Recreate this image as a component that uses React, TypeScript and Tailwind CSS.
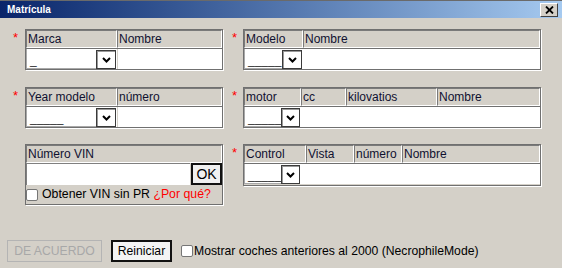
import React from "react";

function Chevron() {
  return (
    <svg width="9" height="6" viewBox="0 0 9 6">
      <path d="M1 1 L4.5 4.5 L8 1" fill="none" stroke="#000" strokeWidth="2" />
    </svg>
  );
}

function Select({ text, className }: { text: string; className: string }) {
  return (
    <div className={`${className} flex h-full bg-white`}>
      <div className="flex-1 border-l border-b border-[#a8a8a8] flex items-end pl-[3px] pb-[1px] text-[12px] leading-[14px] text-[#333]">
        {text}
      </div>
      <div className="w-[20px] h-[19px] mt-[1px] mr-[1px] border border-[#3a3a3a] shadow-[inset_1px_1px_0_#9a9a9a] bg-white flex items-center justify-center">
        <Chevron />
      </div>
    </div>
  );
}

function Head({ className, children }: { className: string; children: React.ReactNode }) {
  return (
    <div
      className={`${className} h-[18px] border border-t-[#7a7a7a] border-l-[#7a7a7a] border-r-white border-b-white bg-[#d4d0c8] pl-[1px] text-[12px] leading-[16px] text-[#101030] whitespace-nowrap overflow-hidden`}
    >
      {children}
    </div>
  );
}

function Star() {
  return <div className="text-[#ff0000] text-[13px] leading-none pt-[2px] pl-[3px]">*</div>;
}

const panelCls =
  "border border-[#707070] shadow-[1px_1px_0_#ffffff] flex flex-col bg-[#d4d0c8]";

export default function App() {
  return (
    <div className="w-[562px] h-[268px] bg-[#d4d0c8] flex flex-col font-['Liberation_Sans',Arial,sans-serif] text-black overflow-hidden">
      {/* Title bar */}
      <div className="h-[18px] border-t border-[#6a6a6a] bg-gradient-to-r from-[#0a246a] to-[#a6caf0] flex items-center justify-between pl-[7px] pr-[4px]">
        <span className="text-white font-bold text-[10px] leading-none">Matrícula</span>
        <div className="w-[18px] h-[14px] bg-[#d4d0c8] border border-t-white border-l-white border-r-[#404040] border-b-[#404040] flex items-center justify-center">
          <svg width="9" height="8" viewBox="0 0 9 8">
            <path d="M1 0.5 L8 7.5 M8 0.5 L1 7.5" stroke="#000" strokeWidth="1.8" />
          </svg>
        </div>
      </div>

      <div className="flex flex-col pt-[11px] pl-[10px]">
        {/* Row 1 */}
        <div className="flex h-[41px]">
          <div className="w-[15px]"><Star /></div>
          <div className={`w-[198px] ${panelCls}`}>
            <div className="flex">
              <Head className="w-[91px]">Marca</Head>
              <Head className="w-[105px]">Nombre</Head>
            </div>
            <div className="flex h-[21px] border-t border-[#707070] bg-white">
              <Select text="_" className="w-[91px]" />
              <div className="w-[105px] border-l border-[#d4d0c8] bg-white" />
            </div>
          </div>
          <div className="w-[6px]" />
          <div className="w-[14px]"><Star /></div>
          <div className={`w-[298px] ${panelCls}`}>
            <div className="flex">
              <Head className="w-[59px]">Modelo</Head>
              <Head className="w-[237px]">Nombre</Head>
            </div>
            <div className="flex h-[21px] border-t border-[#707070] bg-white">
              <Select text="_____" className="w-[59px]" />
              <div className="flex-1 bg-white" />
            </div>
          </div>
        </div>

        {/* Row 2 */}
        <div className="flex h-[41px] mt-[17px]">
          <div className="w-[15px]"><Star /></div>
          <div className={`w-[198px] ${panelCls}`}>
            <div className="flex">
              <Head className="w-[91px]">Year modelo</Head>
              <Head className="w-[105px]">número</Head>
            </div>
            <div className="flex h-[21px] border-t border-[#707070] bg-white">
              <Select text="_____" className="w-[91px]" />
              <div className="w-[105px] border-l border-[#d4d0c8] bg-white" />
            </div>
          </div>
          <div className="w-[6px]" />
          <div className="w-[14px]"><Star /></div>
          <div className={`w-[298px] ${panelCls}`}>
            <div className="flex">
              <Head className="w-[57px]">motor</Head>
              <Head className="w-[45px]">cc</Head>
              <Head className="w-[91px]">kilovatios</Head>
              <Head className="w-[103px]">Nombre</Head>
            </div>
            <div className="flex h-[21px] border-t border-[#707070] bg-white">
              <Select text="_____" className="w-[57px]" />
              <div className="flex-1 bg-white" />
            </div>
          </div>
        </div>

        {/* Row 3 */}
        <div className="flex mt-[16px]">
          <div className="w-[15px]" />
          <div className={`w-[198px] h-[61px] ${panelCls}`}>
            <Head className="w-[196px]">Número VIN</Head>
            <div className="flex h-[22px] items-stretch">
              <div className="w-[164px] bg-white border-t border-l border-[#808080]" />
              <div className="w-[31px] ml-[1px] border-2 border-[#111] bg-[#f0f0f0] flex items-center justify-center text-[14px] leading-none">
                OK
              </div>
            </div>
            <div className="flex items-center h-[19px] text-[12.3px] leading-none">
              <div className="w-[12px] h-[12px] rounded-[2px] border border-[#767676] bg-white mr-[4px]" />
              <span>Obtener VIN sin PR&nbsp;</span>
              <span className="text-[#ff0000]">¿Por qué?</span>
            </div>
          </div>
          <div className="w-[6px]" />
          <div className="w-[14px]"><Star /></div>
          <div className={`w-[298px] h-[42px] ${panelCls}`}>
            <div className="flex">
              <Head className="w-[62px]">Control</Head>
              <Head className="w-[48px]">Vista</Head>
              <Head className="w-[48px]">número</Head>
              <Head className="w-[138px]">Nombre</Head>
            </div>
            <div className="flex h-[21px] border-t border-[#707070] bg-white">
              <Select text="_____" className="w-[57px]" />
              <div className="flex-1 bg-white" />
            </div>
          </div>
        </div>
      </div>

      {/* Bottom row */}
      <div className="flex items-center mt-[35px] pl-[7px] text-[12.2px]">
        <div className="w-[95px] h-[22px] border border-[#b4b4b4] bg-[#d4d0c8] text-[#a8a8a8] flex items-center justify-center leading-none">
          DE ACUERDO
        </div>
        <div className="ml-[9px] w-[61px] h-[22px] border-2 border-[#111] bg-[#f4f4f4] flex items-center justify-center leading-none">
          Reiniciar
        </div>
        <div className="ml-[9px] w-[12px] h-[12px] rounded-[2px] border border-[#767676] bg-white" />
        <span className="ml-[1px] leading-none">Mostrar coches anteriores al 2000 (NecrophileMode)</span>
      </div>
    </div>
  );
}
